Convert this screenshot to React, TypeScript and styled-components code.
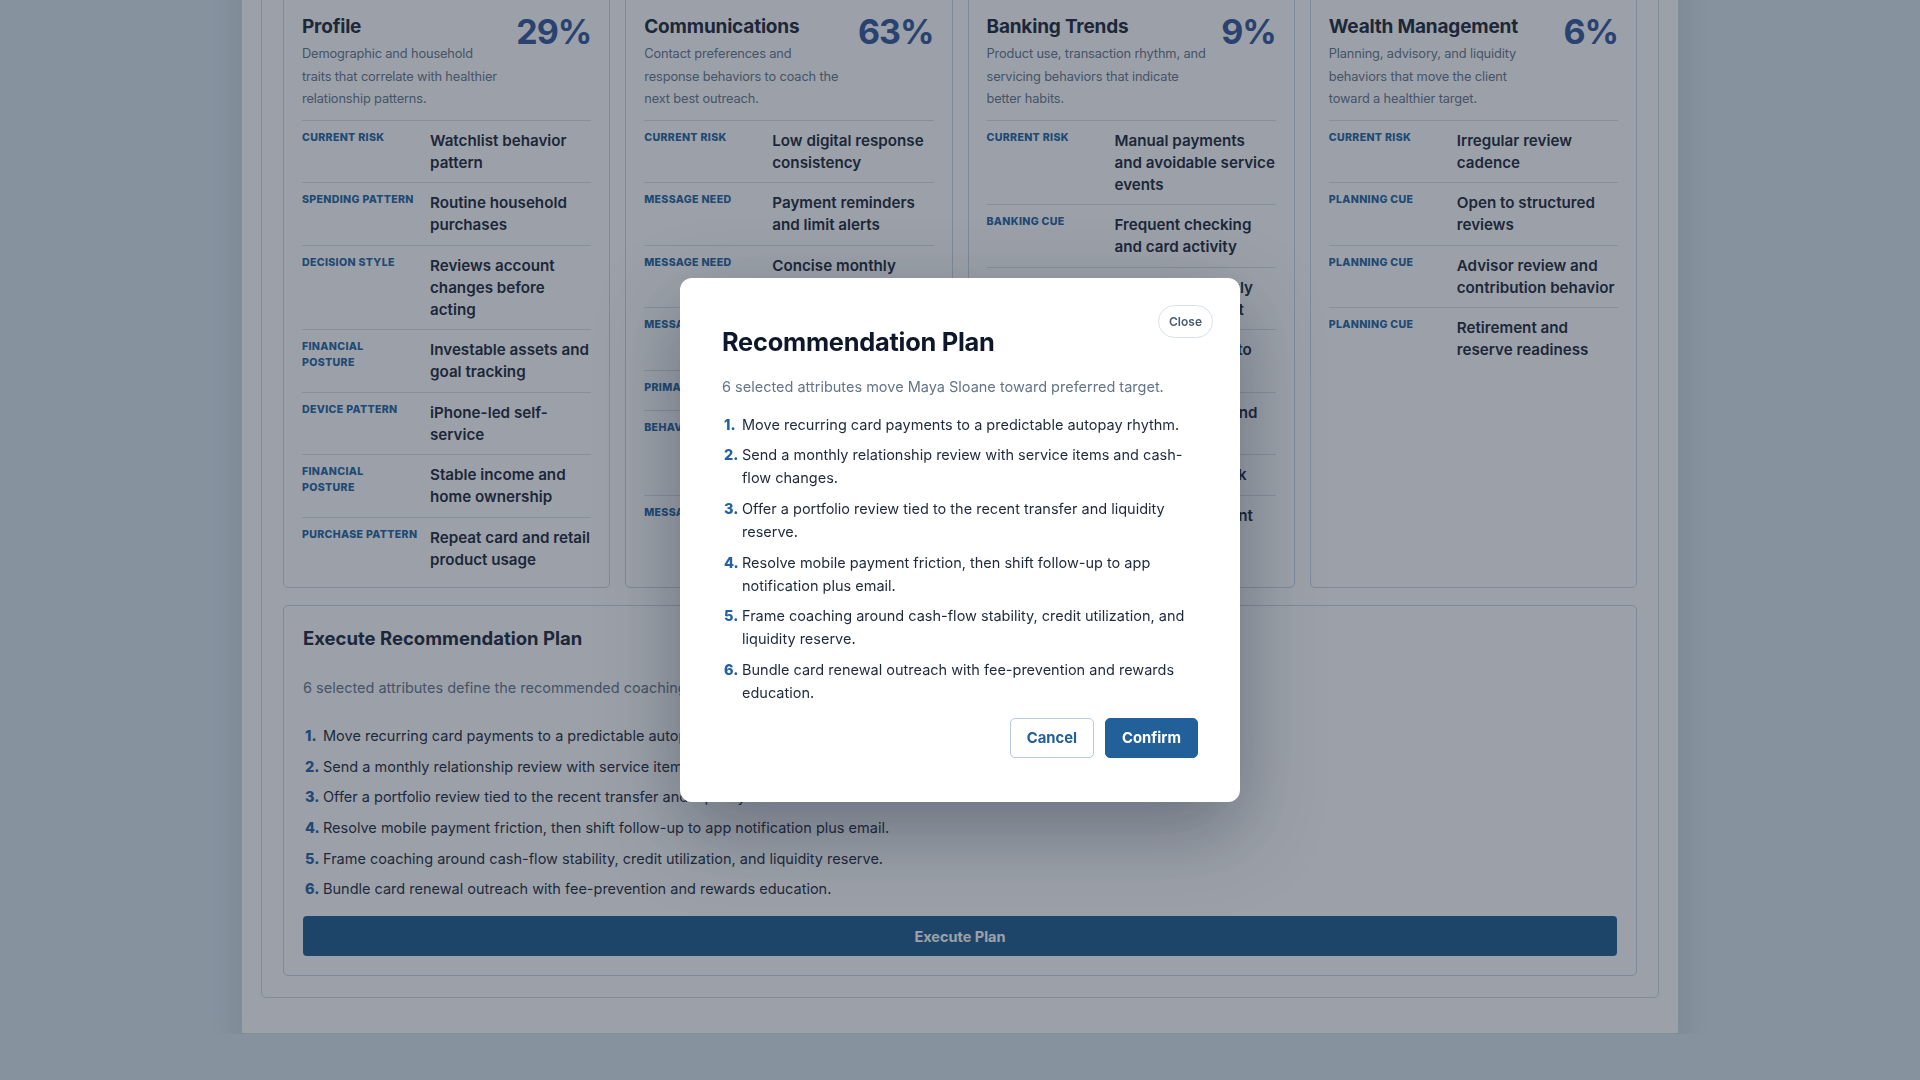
import React from 'react';
import styled, { createGlobalStyle } from 'styled-components';

const GlobalStyle = createGlobalStyle`
  * { box-sizing: border-box; }
  html, body { margin: 0; padding: 0; }
  body {
    background: #d8e4ec;
    font-family: Inter, "Noto Sans", sans-serif;
    color: #1e293b;
    overflow: hidden;
  }
`;

// page behind the dialog (scrolled down a little)
const Shell = styled.main`
  width: 1438px;
  margin: -47px auto 0;
  padding: 19px 19px 35px;
  background: #ffffff;
  border: 1px solid #d3dde7;
  box-shadow: 0 12px 30px rgba(15, 23, 42, 0.12);
`;

const Panel = styled.section`
  display: flex;
  flex-direction: column;
  gap: 17px;
  padding: 21px;
  border: 1px solid #ccd9e5;
  border-radius: 5px;
  background: #ffffff;
`;

const CardGrid = styled.div`
  display: grid;
  grid-template-columns: repeat(4, 1fr);
  column-gap: 15px;
`;

const Card = styled.article`
  padding: 18px 18px 8px;
  border: 1px solid #c9d7e4;
  border-radius: 5px;
  background: #ffffff;
`;

const CardHead = styled.header`
  display: flex;
  align-items: flex-start;
  gap: 14px;
  margin-bottom: 9px;
`;

const CardIntro = styled.div`
  flex: 1;
  min-width: 0;
`;

const CardTitle = styled.h3`
  margin: 0;
  font-size: 19px;
  line-height: 26px;
  font-weight: 700;
  color: #1b2638;
  letter-spacing: -0.01em;
`;

const CardDesc = styled.p`
  margin: 3px 0 0;
  font-size: 12.8px;
  line-height: 22.6px;
  color: #64748b;
  letter-spacing: -0.01em;
`;

const Percent = styled.span`
  font-size: 34px;
  line-height: 36px;
  font-weight: 700;
  color: #33569a;
  letter-spacing: -0.03em;
`;

const Row = styled.div`
  display: grid;
  grid-template-columns: 117px 1fr;
  column-gap: 11px;
  padding: 9px 0 8.5px;
  border-top: 1px solid #d6e0ea;
`;

const RowLabel = styled.span`
  font-size: 10.6px;
  line-height: 15.5px;
  font-weight: 800;
  letter-spacing: 0.03em;
  text-transform: uppercase;
  white-space: pre-line;
  color: #23649f;
`;

const RowValue = styled.span`
  font-size: 15.2px;
  line-height: 22px;
  font-weight: 600;
  color: #1b2638;
`;

const ExecuteBox = styled.section`
  padding: 20px 19px 19px;
  border: 1px solid #c9d7e4;
  border-radius: 5px;
  background: #ffffff;
`;

const ExecuteTitle = styled.h2`
  margin: 0;
  font-size: 18.5px;
  line-height: 24px;
  font-weight: 700;
  color: #1b2638;
`;

const Lead = styled.p<{ $gap: number }>`
  margin: ${(p) => p.$gap}px 0 0;
  font-size: 14.5px;
  line-height: 23px;
  color: #64748b;
`;

const PlanList = styled.ol<{ $gap: number }>`
  display: flex;
  flex-direction: column;
  gap: 7.6px;
  margin: ${(p) => p.$gap}px 0 0;
  padding: 0;
  list-style: none;
`;

const PlanItem = styled.li`
  display: grid;
  grid-template-columns: 13px 1fr;
  column-gap: 5px;
  padding-left: 2px;
  font-size: 14.5px;
  line-height: 23px;
  color: #1e293b;
`;

const PlanNum = styled.span`
  font-weight: 800;
  color: #2362a2;
`;

const WideButton = styled.button`
  display: block;
  width: 100%;
  height: 40px;
  margin-top: 16px;
  border: 0;
  border-radius: 4px;
  background: #1d5b8f;
  color: #ffffff;
  font: 700 14.5px Inter, sans-serif;
`;

// dialog
const Overlay = styled.div`
  position: fixed;
  inset: 0;
  display: flex;
  align-items: center;
  justify-content: center;
  background: rgba(30, 41, 59, 0.44);
`;

const Dialog = styled.div`
  position: relative;
  width: 560px;
  padding: 46px 42px 44px;
  border-radius: 12px;
  background: #ffffff;
  box-shadow: 0 28px 80px rgba(15, 23, 42, 0.35);
`;

const CloseButton = styled.button`
  position: absolute;
  top: 27px;
  right: 27px;
  height: 33px;
  padding: 0 10px;
  border: 1px solid #d8e1eb;
  border-radius: 999px;
  background: #ffffff;
  color: #4b5b70;
  font: 600 12px Inter, sans-serif;
`;

const DialogTitle = styled.h2`
  margin: 0;
  font-size: 25.4px;
  line-height: 36px;
  font-weight: 700;
  color: #0f172a;
  letter-spacing: -0.01em;
`;

const Actions = styled.div`
  display: flex;
  justify-content: flex-end;
  gap: 11px;
  margin-top: 14.5px;
`;

const ActionButton = styled.button<{ $primary?: boolean }>`
  height: 40px;
  padding: 0 16px;
  border-radius: 5px;
  border: 1px solid ${(p) => (p.$primary ? '#22609a' : '#b9cbe0')};
  background: ${(p) => (p.$primary ? '#22609a' : '#ffffff')};
  color: ${(p) => (p.$primary ? '#ffffff' : '#22609a')};
  font: 700 14.8px Inter, sans-serif;
`;

type Attr = { label: string; value: string };
type Group = { title: string; pct: string; desc: string; rows: Attr[] };

const groups: Group[] = [
  {
    title: 'Profile',
    pct: '29%',
    desc: 'Demographic and household traits that correlate with healthier relationship patterns.',
    rows: [
      { label: 'Current risk', value: 'Watchlist behavior pattern' },
      { label: 'Spending pattern', value: 'Routine household purchases' },
      { label: 'Decision style', value: 'Reviews account changes before acting' },
      { label: 'Financial\nposture', value: 'Investable assets and goal tracking' },
      { label: 'Device pattern', value: 'iPhone-led self-service' },
      { label: 'Financial\nposture', value: 'Stable income and home ownership' },
      { label: 'Purchase pattern', value: 'Repeat card and retail product usage' },
    ],
  },
  {
    title: 'Communications',
    pct: '63%',
    desc: 'Contact preferences and response behaviors to coach the next best outreach.',
    rows: [
      { label: 'Current risk', value: 'Low digital response consistency' },
      { label: 'Message need', value: 'Payment reminders and limit alerts' },
      { label: 'Message need', value: 'Concise monthly summaries' },
      { label: 'Message need', value: 'Fee alerts before due dates' },
      { label: 'Primary channel', value: 'Mobile app and email' },
      { label: 'Behavior signal', value: 'Opens alerts but rarely replies to outreach calls' },
      { label: 'Message need', value: 'Short, action-first reminders' },
    ],
  },
  {
    title: 'Banking Trends',
    pct: '9%',
    desc: 'Product use, transaction rhythm, and servicing behaviors that indicate better habits.',
    rows: [
      { label: 'Current risk', value: 'Manual payments and avoidable service events' },
      { label: 'Banking cue', value: 'Frequent checking and card activity' },
      { label: 'Banking cue', value: 'Pays bills biweekly from one account' },
      { label: 'Banking cue', value: 'Sweeps savings to cover bills' },
      { label: 'Service pattern', value: 'Scheduled bills and autopay gaps' },
      { label: 'Credit cue', value: 'Low overdraft risk' },
      { label: 'Product mix', value: 'Card use dominant' },
    ],
  },
  {
    title: 'Wealth Management',
    pct: '6%',
    desc: 'Planning, advisory, and liquidity behaviors that move the client toward a healthier target.',
    rows: [
      { label: 'Current risk', value: 'Irregular review cadence' },
      { label: 'Planning cue', value: 'Open to structured reviews' },
      { label: 'Planning cue', value: 'Advisor review and contribution behavior' },
      { label: 'Planning cue', value: 'Retirement and reserve readiness' },
    ],
  },
];

const plan = [
  'Move recurring card payments to a predictable autopay rhythm.',
  'Send a monthly relationship review with service items and cash-flow changes.',
  'Offer a portfolio review tied to the recent transfer and liquidity reserve.',
  'Resolve mobile payment friction, then shift follow-up to app notification plus email.',
  'Frame coaching around cash-flow stability, credit utilization, and liquidity reserve.',
  'Bundle card renewal outreach with fee-prevention and rewards education.',
];

const Steps = ({ gap }: { gap: number }) => (
  <PlanList $gap={gap}>
    {plan.map((step, i) => (
      <PlanItem key={i}>
        <PlanNum>{i + 1}.</PlanNum>
        <span>{step}</span>
      </PlanItem>
    ))}
  </PlanList>
);

const App = () => {
  return (
    <>
      <GlobalStyle />
      <Shell>
        <Panel>
          <CardGrid>
            {groups.map((g) => (
              <Card key={g.title}>
                <CardHead>
                  <CardIntro>
                    <CardTitle>{g.title}</CardTitle>
                    <CardDesc>{g.desc}</CardDesc>
                  </CardIntro>
                  <Percent>{g.pct}</Percent>
                </CardHead>
                {g.rows.map((r, i) => (
                  <Row key={i}>
                    <RowLabel>{r.label}</RowLabel>
                    <RowValue>{r.value}</RowValue>
                  </Row>
                ))}
              </Card>
            ))}
          </CardGrid>

          <ExecuteBox>
            <ExecuteTitle>Execute Recommendation Plan</ExecuteTitle>
            <Lead $gap={26}>6 selected attributes define the recommended coaching plan for Maya Sloane.</Lead>
            <Steps gap={25} />
            <WideButton>Execute Plan</WideButton>
          </ExecuteBox>
        </Panel>
      </Shell>

      <Overlay>
        <Dialog role="dialog">
          <CloseButton>Close</CloseButton>
          <DialogTitle>Recommendation Plan</DialogTitle>
          <Lead $gap={15.5}>6 selected attributes move Maya Sloane toward preferred target.</Lead>
          <Steps gap={14.5} />
          <Actions>
            <ActionButton>Cancel</ActionButton>
            <ActionButton $primary>Confirm</ActionButton>
          </Actions>
        </Dialog>
      </Overlay>
    </>
  );
};

export default App;
